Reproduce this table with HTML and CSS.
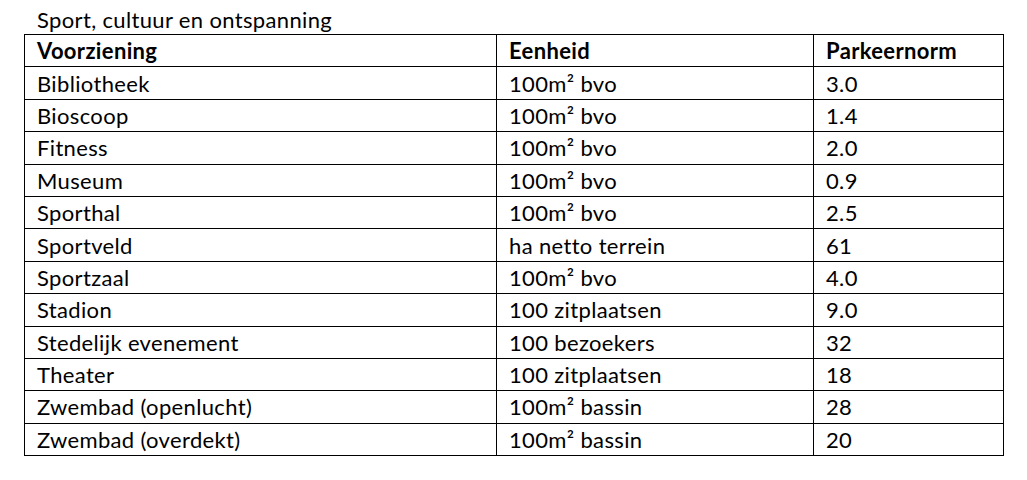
FILE: index.html
```html
<!DOCTYPE html>
<html lang="nl">
<head>
<meta charset="utf-8">
<title>Sport, cultuur en ontspanning</title>
<link rel="stylesheet" href="styles.css">
</head>
<body>
<div class="page">
  <div class="caption">Sport, cultuur en ontspanning</div>
  <table class="norms">
    <colgroup>
      <col class="c1"><col class="c2"><col class="c3">
    </colgroup>
    <thead>
      <tr><th>Voorziening</th><th>Eenheid</th><th>Parkeernorm</th></tr>
    </thead>
    <tbody>
      <tr><td>Bibliotheek</td><td>100m² bvo</td><td>3.0</td></tr>
      <tr><td>Bioscoop</td><td>100m² bvo</td><td>1.4</td></tr>
      <tr><td>Fitness</td><td>100m² bvo</td><td>2.0</td></tr>
      <tr><td>Museum</td><td>100m² bvo</td><td>0.9</td></tr>
      <tr><td>Sporthal</td><td>100m² bvo</td><td>2.5</td></tr>
      <tr><td>Sportveld</td><td>ha netto terrein</td><td>61</td></tr>
      <tr><td>Sportzaal</td><td>100m² bvo</td><td>4.0</td></tr>
      <tr><td>Stadion</td><td>100 zitplaatsen</td><td>9.0</td></tr>
      <tr><td>Stedelijk evenement</td><td>100 bezoekers</td><td>32</td></tr>
      <tr><td>Theater</td><td>100 zitplaatsen</td><td>18</td></tr>
      <tr><td>Zwembad (openlucht)</td><td>100m² bassin</td><td>28</td></tr>
      <tr><td>Zwembad (overdekt)</td><td>100m² bassin</td><td>20</td></tr>
    </tbody>
  </table>
</div>
</body>
</html>
```
FILE: styles.css
```css
html, body {
  margin: 0;
  padding: 0;
  background: #ffffff;
}
body {
  font-family: Lato, "Open Sans", sans-serif;
  color: #000000;
  letter-spacing: 0.35px;
}
.page {
  padding: 0 0 0 24px;
}
.caption {
  height: 34px;
  box-sizing: border-box;
  padding: 8px 0 0 13px;
  font-size: 22px;
  line-height: 24px;
}
.norms {
  border-collapse: collapse;
  table-layout: fixed;
  width: 980px;
  font-size: 22px;
}
.c1 { width: 472px; }
.c2 { width: 317px; }
.c3 { width: 190px; }
.norms th, .norms td {
  border: 1px solid #000000;
  height: 30.4px;
  padding: 1px 0 0 12px;
  text-align: left;
  vertical-align: middle;
  line-height: 24px;
  white-space: nowrap;
}
.norms th {
  font-weight: 700;
}
```
